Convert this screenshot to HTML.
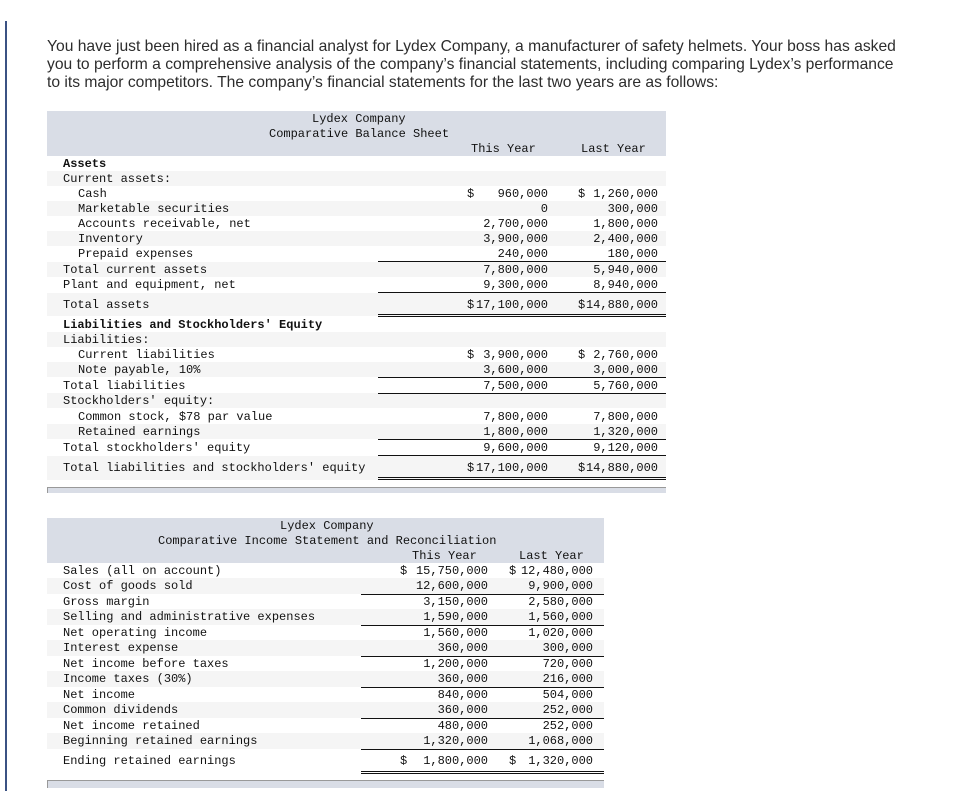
<!DOCTYPE html>
<html><head><meta charset="utf-8"><style>
*{margin:0;padding:0;box-sizing:border-box}
body{width:966px;height:785px;background:#fff;position:relative;overflow:hidden;font-family:"Liberation Mono",monospace;font-size:12px;color:#111}
.vl{position:absolute;left:5px;top:21px;width:2px;height:770px;background:#3b5283}
.p{position:absolute;left:47px;top:38px;font-family:"Liberation Sans",sans-serif;font-size:15.65px;line-height:18px;color:#2d2d2d;white-space:nowrap}
.a{position:absolute;white-space:pre;line-height:15px}
.bg{position:absolute}
.r{position:absolute;text-align:right;white-space:pre;line-height:15px}
.ln{position:absolute;height:1px;background:#111}
</style></head><body>
<div class="vl"></div>
<div class="p">You have just been hired as a financial analyst for Lydex Company, a manufacturer of safety helmets. Your boss has asked<br>you to perform a comprehensive analysis of the company’s financial statements, including comparing Lydex’s performance<br>to its major competitors. The company’s financial statements for the last two years are as follows:</div>

<div class="bg" style="left:47px;top:111px;width:619px;height:45px;background:#d9dde6"></div>
<div class="a" style="left:312px;top:112px">Lydex Company</div>
<div class="a" style="left:269px;top:127px">Comparative Balance Sheet</div>
<div class="a" style="left:471px;top:142px">This Year</div>
<div class="a" style="left:581px;top:142px">Last Year</div>

<div class="bg" style="left:47px;top:171px;width:619px;height:15px;background:#f5f5f5"></div>
<div class="bg" style="left:47px;top:201px;width:619px;height:15px;background:#f5f5f5"></div>
<div class="bg" style="left:47px;top:231px;width:619px;height:15px;background:#f5f5f5"></div>
<div class="bg" style="left:47px;top:262px;width:619px;height:15px;background:#f5f5f5"></div>
<div class="bg" style="left:47px;top:293px;width:619px;height:23px;background:#f5f5f5"></div>
<div class="bg" style="left:47px;top:332px;width:619px;height:15px;background:#f5f5f5"></div>
<div class="bg" style="left:47px;top:362px;width:619px;height:15px;background:#f5f5f5"></div>
<div class="bg" style="left:47px;top:393px;width:619px;height:15px;background:#f5f5f5"></div>
<div class="bg" style="left:47px;top:424px;width:619px;height:15px;background:#f5f5f5"></div>
<div class="bg" style="left:47px;top:456px;width:619px;height:24px;background:#f5f5f5"></div>

<div class="a" style="left:63px;top:157px;font-weight:bold">Assets</div>
<div class="a" style="left:63px;top:172px">Current assets:</div>
<div class="a" style="left:78px;top:187px">Cash</div>
<div class="a" style="left:78px;top:202px">Marketable securities</div>
<div class="a" style="left:78px;top:217px">Accounts receivable, net</div>
<div class="a" style="left:78px;top:232px">Inventory</div>
<div class="a" style="left:78px;top:247px">Prepaid expenses</div>
<div class="a" style="left:63px;top:263px">Total current assets</div>
<div class="a" style="left:63px;top:278px">Plant and equipment, net</div>
<div class="a" style="left:63px;top:298px">Total assets</div>
<div class="a" style="left:63px;top:318px;font-weight:bold">Liabilities and Stockholders' Equity</div>
<div class="a" style="left:63px;top:333px">Liabilities:</div>
<div class="a" style="left:78px;top:348px">Current liabilities</div>
<div class="a" style="left:78px;top:363px">Note payable, 10%</div>
<div class="a" style="left:63px;top:379px">Total liabilities</div>
<div class="a" style="left:63px;top:394px">Stockholders' equity:</div>
<div class="a" style="left:78px;top:410px">Common stock, $78 par value</div>
<div class="a" style="left:78px;top:425px">Retained earnings</div>
<div class="a" style="left:63px;top:441px">Total stockholders' equity</div>
<div class="a" style="left:63px;top:461px">Total liabilities and stockholders' equity</div>

<div class="a" style="left:467px;top:187px">$</div><div class="a" style="left:578px;top:187px">$</div>
<div class="a" style="left:467px;top:298px">$</div><div class="a" style="left:578px;top:298px">$</div>
<div class="a" style="left:467px;top:348px">$</div><div class="a" style="left:578px;top:348px">$</div>
<div class="a" style="left:467px;top:461px">$</div><div class="a" style="left:578px;top:461px">$</div>

<div class="r" style="right:418px;top:187px">960,000<br>0<br>2,700,000<br>3,900,000<br>240,000</div>
<div class="r" style="right:308px;top:187px">1,260,000<br>300,000<br>1,800,000<br>2,400,000<br>180,000</div>
<div class="r" style="right:418px;top:263px">7,800,000</div><div class="r" style="right:308px;top:263px">5,940,000</div>
<div class="r" style="right:418px;top:278px">9,300,000</div><div class="r" style="right:308px;top:278px">8,940,000</div>
<div class="r" style="right:418px;top:298px">17,100,000</div><div class="r" style="right:308px;top:298px">14,880,000</div>
<div class="r" style="right:418px;top:348px">3,900,000<br>3,600,000</div><div class="r" style="right:308px;top:348px">2,760,000<br>3,000,000</div>
<div class="r" style="right:418px;top:379px">7,500,000</div><div class="r" style="right:308px;top:379px">5,760,000</div>
<div class="r" style="right:418px;top:410px">7,800,000<br>1,800,000</div><div class="r" style="right:308px;top:410px">7,800,000<br>1,320,000</div>
<div class="r" style="right:418px;top:441px">9,600,000</div><div class="r" style="right:308px;top:441px">9,120,000</div>
<div class="r" style="right:418px;top:461px">17,100,000</div><div class="r" style="right:308px;top:461px">14,880,000</div>

<div class="ln" style="left:378px;width:288px;top:261px"></div>
<div class="ln" style="left:378px;width:288px;top:292px"></div>
<div class="ln" style="left:378px;width:288px;top:314px"></div>
<div class="ln" style="left:378px;width:288px;top:316px"></div>
<div class="ln" style="left:378px;width:288px;top:377px"></div>
<div class="ln" style="left:378px;width:288px;top:393px"></div>
<div class="ln" style="left:378px;width:288px;top:439px"></div>
<div class="ln" style="left:378px;width:288px;top:455px"></div>
<div class="ln" style="left:378px;width:288px;top:477px"></div>
<div class="ln" style="left:378px;width:288px;top:479px"></div>
<div class="bg" style="left:47px;top:487px;width:619px;height:6px;background:#d9dde6;border-top:1px solid #999;border-left:1px solid #999"></div>

<div class="bg" style="left:47px;top:518px;width:557px;height:45px;background:#d9dde6"></div>
<div class="a" style="left:280px;top:519px">Lydex Company</div>
<div class="a" style="left:158px;top:534px">Comparative Income Statement and Reconciliation</div>
<div class="a" style="left:412px;top:549px">This Year</div>
<div class="a" style="left:519px;top:549px">Last Year</div>

<div class="bg" style="left:47px;top:578px;width:557px;height:16px;background:#f5f5f5"></div>
<div class="bg" style="left:47px;top:609px;width:557px;height:16px;background:#f5f5f5"></div>
<div class="bg" style="left:47px;top:640px;width:557px;height:16px;background:#f5f5f5"></div>
<div class="bg" style="left:47px;top:671px;width:557px;height:16px;background:#f5f5f5"></div>
<div class="bg" style="left:47px;top:702px;width:557px;height:16px;background:#f5f5f5"></div>
<div class="bg" style="left:47px;top:733px;width:557px;height:16px;background:#f5f5f5"></div>

<div class="a" style="left:63px;top:564px">Sales (all on account)</div>
<div class="a" style="left:63px;top:579px">Cost of goods sold</div>
<div class="a" style="left:63px;top:595px">Gross margin</div>
<div class="a" style="left:63px;top:610px">Selling and administrative expenses</div>
<div class="a" style="left:63px;top:626px">Net operating income</div>
<div class="a" style="left:63px;top:641px">Interest expense</div>
<div class="a" style="left:63px;top:657px">Net income before taxes</div>
<div class="a" style="left:63px;top:672px">Income taxes (30%)</div>
<div class="a" style="left:63px;top:688px">Net income</div>
<div class="a" style="left:63px;top:703px">Common dividends</div>
<div class="a" style="left:63px;top:719px">Net income retained</div>
<div class="a" style="left:63px;top:734px">Beginning retained earnings</div>
<div class="a" style="left:63px;top:754px">Ending retained earnings</div>

<div class="a" style="left:400px;top:564px">$</div><div class="a" style="left:509px;top:564px">$</div>
<div class="a" style="left:400px;top:754px">$</div><div class="a" style="left:509px;top:754px">$</div>
<div class="r" style="right:478px;top:564px">15,750,000</div><div class="r" style="right:373px;top:564px">12,480,000</div>
<div class="r" style="right:478px;top:579px">12,600,000</div><div class="r" style="right:373px;top:579px">9,900,000</div>
<div class="r" style="right:478px;top:595px">3,150,000</div><div class="r" style="right:373px;top:595px">2,580,000</div>
<div class="r" style="right:478px;top:610px">1,590,000</div><div class="r" style="right:373px;top:610px">1,560,000</div>
<div class="r" style="right:478px;top:626px">1,560,000</div><div class="r" style="right:373px;top:626px">1,020,000</div>
<div class="r" style="right:478px;top:641px">360,000</div><div class="r" style="right:373px;top:641px">300,000</div>
<div class="r" style="right:478px;top:657px">1,200,000</div><div class="r" style="right:373px;top:657px">720,000</div>
<div class="r" style="right:478px;top:672px">360,000</div><div class="r" style="right:373px;top:672px">216,000</div>
<div class="r" style="right:478px;top:688px">840,000</div><div class="r" style="right:373px;top:688px">504,000</div>
<div class="r" style="right:478px;top:703px">360,000</div><div class="r" style="right:373px;top:703px">252,000</div>
<div class="r" style="right:478px;top:719px">480,000</div><div class="r" style="right:373px;top:719px">252,000</div>
<div class="r" style="right:478px;top:734px">1,320,000</div><div class="r" style="right:373px;top:734px">1,068,000</div>
<div class="r" style="right:478px;top:754px">1,800,000</div><div class="r" style="right:373px;top:754px">1,320,000</div>

<div class="ln" style="left:361px;width:243px;top:594px"></div>
<div class="ln" style="left:361px;width:243px;top:625px"></div>
<div class="ln" style="left:361px;width:243px;top:656px"></div>
<div class="ln" style="left:361px;width:243px;top:687px"></div>
<div class="ln" style="left:361px;width:243px;top:718px"></div>
<div class="ln" style="left:361px;width:243px;top:749px"></div>
<div class="ln" style="left:361px;width:243px;top:771px"></div>
<div class="ln" style="left:361px;width:243px;top:773px"></div>
<div class="bg" style="left:47px;top:780px;width:557px;height:8px;background:#d9dde6;border-top:1px solid #999;border-left:1px solid #999"></div>
</body></html>
